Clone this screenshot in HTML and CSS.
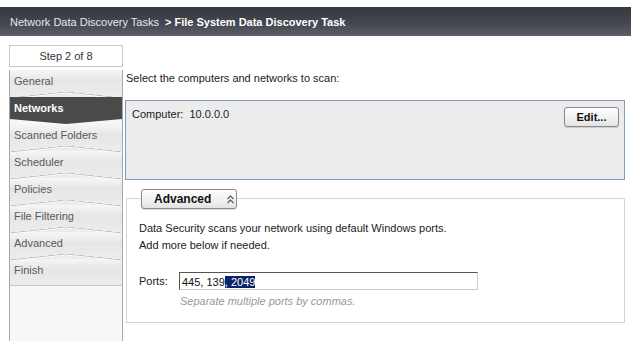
FILE: index.html
```html
<!DOCTYPE html>
<html lang="en">
<head>
  <meta charset="UTF-8" />
  <title>File System Data Discovery Task</title>
  <link rel="stylesheet" href="styles.css">
</head>
<body>
  <div class="titlebar">
    <span class="crumb">Network Data Discovery Tasks</span>
    <span class="current">&gt; File System Data Discovery Task</span>
  </div>
  <div class="page">
    <div class="sidebar">
      <div class="step-box">Step 2 of 8</div>
      <div class="steps">
        <div class="step">General</div>
        <div class="step active">Networks</div>
        <div class="step">Scanned Folders</div>
        <div class="step">Scheduler</div>
        <div class="step">Policies</div>
        <div class="step">File Filtering</div>
        <div class="step">Advanced</div>
        <div class="step last">Finish</div>
        <div class="steps-fill"></div>
      </div>
    </div>
    <div class="main">
      <p class="intro">Select the computers and networks to scan:</p>
      <div class="targets">
        <span class="target">Computer:&nbsp; 10.0.0.0</span>
        <button class="btn edit-btn">Edit...</button>
      </div>
      <div class="advanced">
        <button class="btn adv-btn">Advanced
          <svg width="9" height="9" viewBox="0 0 9 9"><polyline points="1.5,4 4.5,1 7.5,4" fill="none" stroke="#555" stroke-width="1.1"/><polyline points="1.5,8 4.5,5 7.5,8" fill="none" stroke="#555" stroke-width="1.1"/></svg>
        </button>
        <div class="adv-body">
          <p class="adv-text">Data Security scans your network using default Windows ports.<br>Add more below if needed.</p>
          <div class="ports-row">
            <label>Ports:</label>
            <div class="ports-input"><span>445, 139</span><span class="sel">, 2049</span></div>
          </div>
          <p class="hint">Separate multiple ports by commas.</p>
        </div>
      </div>
    </div>
  </div>
</body>
</html>
```

FILE: styles.css
```css
body { margin: 0; font-family: "Liberation Sans", Arial, sans-serif; font-size: 11px; color: #222; background: #fff; height: 341px; overflow: hidden; }
p { margin: 0; }

/* Title bar */
.titlebar {
  margin-top: 7px;
  height: 29px;
  padding-left: 10px;
  display: flex;
  align-items: center;
  gap: 6px;
  background: linear-gradient(#35383f 0%, #43464e 55%, #5b5f68 100%);
  font-size: 11px;
}
.titlebar .crumb { color: #e8e8ec; }
.titlebar .current { color: #fff; font-weight: bold; }

.page { display: flex; padding-top: 9px; }

/* Wizard steps */
.sidebar { margin-left: 9px; width: 114px; display: flex; flex-direction: column; }
.step-box {
  height: 20px;
  border: 1px solid #c8c8c8;
  display: flex;
  align-items: center;
  justify-content: center;
  color: #333;
}
.steps {
  margin-top: 3px;
  height: 272px;
  border-left: 1px solid #a8a8a8;
  border-right: 1px solid #a8a8a8;
  display: flex;
  flex-direction: column;
  background: #f7f7f7;
}
.step {
  height: 27px;
  flex-shrink: 0;
  padding: 5px 0 0 4px;
  box-sizing: border-box;
  color: #5a5a5a;
  background: linear-gradient(#f6f6f6, #e6e6e6 40%, #ececec);
  position: relative;
}
.step::after {
  content: "";
  position: absolute;
  left: 0; right: 0; bottom: -1px;
  height: 6px;
  background: linear-gradient(to bottom right, transparent 46%, #b8b8b8 48%, #fff 58%, transparent 62%) left / 50% 100% no-repeat,
              linear-gradient(to bottom left, transparent 46%, #b8b8b8 48%, #fff 58%, transparent 62%) right / 50% 100% no-repeat;
  z-index: 1;
}
.step.last::after { display: none; }
.step.last { border-bottom: 1px solid #c8c8c8; }
.step.active {
  background: #4a4a4a;
  color: #fff;
  font-weight: bold;
  clip-path: polygon(0 0, 100% 0, 100% 22px, 50% 27px, 0 22px);
  z-index: 2;
}
.step.active::after { display: none; }
.steps-fill { flex: 1; }

/* Main area */
.main { margin-left: 2px; width: 500px; }
.intro { margin: 27px 0 0 1px; height: 14px; }
.targets {
  margin-top: 14px;
  height: 80px;
  border: 1px solid #7f9db9;
  background: #ececec;
  display: flex;
  justify-content: space-between;
  align-items: flex-start;
  padding: 6px 5px 0 6px;
  box-sizing: border-box;
}
.target { margin-top: 1px; color: #222; }
.btn {
  font-family: inherit;
  font-size: 11px;
  font-weight: bold;
  color: #111;
  background: linear-gradient(#fdfdfd, #f0f0f0 60%, #e2e2e2);
  border: 1px solid #8a8a8a;
  border-radius: 3px;
  box-shadow: 0 1px 1px rgba(0,0,0,0.15);
  padding: 0;
  cursor: pointer;
}
.edit-btn { width: 55px; height: 20px; }

.advanced { margin-top: 9px; padding-top: 9px; position: relative; }
.adv-btn {
  position: absolute;
  left: 16px; top: 0;
  width: 96px; height: 20px;
  font-size: 12px;
  display: flex;
  align-items: center;
  padding-left: 12px;
  gap: 15px;
  z-index: 1;
}
.adv-body {
  margin-left: 1px;
  height: 125px;
  border: 1px solid #d4d4e0;
  padding: 21px 0 0 12px;
  box-sizing: border-box;
}
.adv-text { line-height: 17px; }
.ports-row { display: flex; align-items: center; margin-top: 18px; }
.ports-row label { width: 40px; }
.ports-input {
  width: 299px;
  height: 18px;
  box-sizing: border-box;
  border: 1px solid;
  border-color: #555 #ccc #ccc #555;
  padding: 1px 2px 0 2px;
  color: #111;
  display: flex;
  align-items: center;
}
.ports-input .sel { background: #0a246a; color: #fff; }
.hint { margin: 5px 0 0 41px; color: #999; font-style: italic; }
```
